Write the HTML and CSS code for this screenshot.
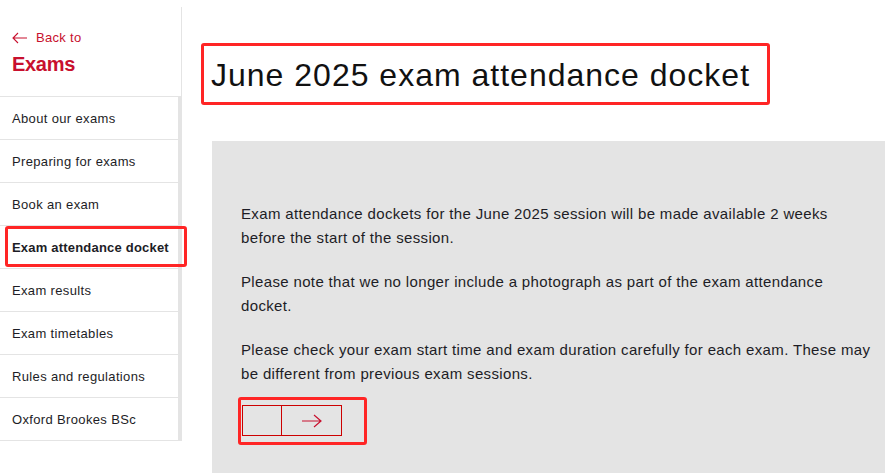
FILE: index.html
```
<!DOCTYPE html>
<html lang="en">

<head>
    <meta charset="UTF-8">
    <meta name="viewport" content="width=device-width, initial-scale=1.0">
    <title>June 2025 exam attendance docket</title>
    <link rel="stylesheet" href="styles.css">
</head>

<body>
    <div class="page">
        <aside class="sidebar">
            <div class="side-head">
                <a class="back" href="#">
                    <svg class="back-arrow" width="15" height="12" viewBox="0 0 15 12">
                        <path d="M15 6 H1 M6 1 L1 6 L6 11" fill="none" stroke="#c8102e" stroke-width="1.1"/>
                    </svg>
                    Back to
                </a>
                <div class="section-title">Exams</div>
            </div>
            <ul class="side-nav">
                <li><a href="#">About our exams</a></li>
                <li><a href="#">Preparing for exams</a></li>
                <li><a href="#">Book an exam</a></li>
                <li class="active"><a href="#">Exam attendance docket</a></li>
                <li><a href="#">Exam results</a></li>
                <li><a href="#">Exam timetables</a></li>
                <li><a href="#">Rules and regulations</a></li>
                <li><a href="#">Oxford Brookes BSc</a></li>
            </ul>
        </aside>

        <main class="content">
            <h1 class="title">June 2025 exam attendance docket</h1>
            <div class="panel">
                <p>Exam attendance dockets for the June 2025 session will be made available 2 weeks before the start of the session.</p>
                <p>Please note that we no longer include a photograph as part of the exam attendance docket.</p>
                <p>Please check your exam start time and exam duration carefully for each exam. These may be different from previous exam sessions.</p>
                <div class="mark">
                    <a class="docket-btn" href="#">
                        <span class="btn-label"></span>
                        <span class="btn-icon">
                            <svg width="22" height="14" viewBox="0 0 22 14">
                                <path d="M1 7 H20 M13 1 L20 7 L13 13" fill="none" stroke="#c8102e" stroke-width="1.2"/>
                            </svg>
                        </span>
                    </a>
                </div>
            </div>
        </main>
    </div>
</body>

</html>
```

FILE: styles.css
```
* {
    margin: 0;
    padding: 0;
    box-sizing: border-box;
}

body {
    font-family: "Liberation Sans", Arial, sans-serif;
    color: #1d1d26;
    background-color: #fff;
    overflow: hidden;
}

a {
    text-decoration: none;
    color: inherit;
}

.page {
    display: flex;
    height: 473px;
}

/* left navigation */

.sidebar {
    width: 182px;
    flex-shrink: 0;
    padding-top: 7px;
}

.side-head {
    height: 90px;
    padding: 21px 0 0 12px;
    border-right: 1px solid #e4e4e4;
    border-bottom: 1px solid #e4e4e4;
}

.back {
    display: flex;
    align-items: center;
    font-size: 13px;
    letter-spacing: 0.3px;
    color: #c8102e;
    line-height: 20px;
}

.back-arrow {
    margin-right: 9px;
}

.section-title {
    font-size: 20px;
    font-weight: bold;
    letter-spacing: -0.3px;
    color: #c8102e;
    line-height: 28px;
    margin-top: 2px;
}

.side-nav {
    list-style: none;
    border-right: 4px solid #e4e4e4;
}

.side-nav li {
    position: relative;
    height: 43px;
    border-bottom: 1px solid #e4e4e4;
}

.side-nav a {
    display: block;
    padding-left: 12px;
    line-height: 43px;
    font-size: 13px;
    letter-spacing: 0.35px;
}

.side-nav .active a {
    font-weight: bold;
    letter-spacing: 0.2px;
}

.side-nav .active::after {
    content: "";
    position: absolute;
    left: 5px;
    right: -9px;
    top: 0;
    bottom: 1px;
    border: 3px solid #ff2525;
    border-radius: 3px;
}

/* main content */

.content {
    flex: 1;
    padding-left: 19px;
    padding-top: 43px;
}

.title {
    display: inline-block;
    font-size: 32px;
    font-weight: normal;
    letter-spacing: 1px;
    color: #111;
    height: 62px;
    line-height: 58px;
    padding: 0 17px 0 7px;
    border: 3px solid #ff2525;
    border-radius: 3px;
}

.panel {
    margin: 36px 0 0 11px;
    background-color: #e4e4e4;
    height: 340px;
    padding: 61px 0 0 29px;
}

.panel p {
    font-size: 15px;
    letter-spacing: 0.35px;
    line-height: 24px;
    max-width: 633px;
    margin-bottom: 20px;
}

.panel p:nth-of-type(3) {
    margin-bottom: 11px;
}

.mark {
    display: inline-block;
    margin-left: -3px;
    padding: 5px 22px 6px 1px;
    border: 3px solid #ff2525;
    border-radius: 3px;
}

.docket-btn {
    display: flex;
    width: 100px;
    height: 31px;
    border: 1px solid #c00;
}

.btn-label {
    width: 39px;
    border-right: 1px solid #c00;
}

.btn-icon {
    flex: 1;
    display: flex;
    align-items: center;
    justify-content: center;
}
```
